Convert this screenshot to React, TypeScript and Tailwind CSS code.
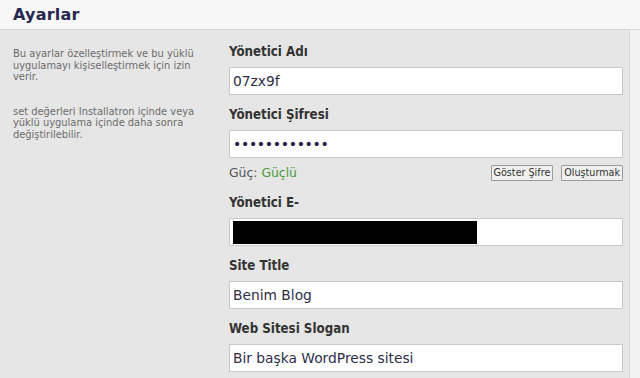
import React from 'react';

const Label: React.FC<{ children: React.ReactNode }> = ({ children }) => (
  <div className="text-[13.2px] font-bold text-[#333] leading-[16px] mb-[7px] [font-stretch:condensed]">{children}</div>
);

const Field: React.FC<{ children?: React.ReactNode }> = ({ children }) => (
  <div className="h-[28px] bg-white border border-[#c8c8c8] flex items-center px-[3px] text-[13.8px] text-[#2e2e4a]">
    {children}
  </div>
);

export default function App() {
  return (
    <div
      className="w-[640px] h-[378px] overflow-hidden bg-[#f4f4f4] flex flex-col"
      style={{ fontFamily: '"DejaVu Sans", Verdana, sans-serif' }}
    >
      <div className="h-[30px] shrink-0 bg-[#f7f7f7] border-b border-[#d6d6d6] flex items-center pl-[13px]">
        <h1 className="text-[16px] font-bold text-[#27274f] tracking-[0.2px]">Ayarlar</h1>
      </div>

      <div className="flex flex-1 min-h-0">
        <div className="flex flex-1 bg-[#e6e6e6] border-r border-[#d8d8d8]">
          {/* help text */}
          <div className="w-[216px] shrink-0 pl-[13px] pr-[3px] pt-[18px] text-[9.9px] leading-[11.6px] text-[#6b6b6b]">
            <p>Bu ayarlar özelleştirmek ve bu yüklü uygulamayı kişiselleştirmek için izin verir.</p>
            <p className="mt-[23px]">set değerleri Installatron içinde veya yüklü uygulama içinde daha sonra değiştirilebilir.</p>
          </div>

          {/* form */}
          <div className="flex-1 pl-[13px] pr-[6px] pt-[14px]">
            <Label>Yönetici Adı</Label>
            <Field>07zx9f</Field>

            <div className="mt-[12px]">
              <Label>Yönetici Şifresi</Label>
              <Field>
                <span className="text-[#22224a] text-[14px] tracking-[-0.3px] leading-none">••••••••••••</span>
              </Field>
            </div>

            <div className="flex items-center justify-between mt-[7px] h-[16px]">
              <div className="text-[12.4px] text-[#555]">
                Güç: <span className="text-[#4b9a3c]">Güçlü</span>
              </div>
              <div className="flex gap-[8px]">
                <button className="h-[16px] px-[2px] text-[9.6px] leading-none text-[#333] bg-[#efefef] border border-[#9a9a9a] rounded-[1px]">
                  Göster Şifre
                </button>
                <button className="h-[16px] px-[2px] text-[9.6px] leading-none text-[#333] bg-[#efefef] border border-[#9a9a9a] rounded-[1px]">
                  Oluşturmak
                </button>
              </div>
            </div>

            <div className="mt-[14px]">
              <Label>Yönetici E-</Label>
              <Field>
                <div className="w-[244px] h-[23px] bg-black" />
              </Field>
            </div>

            <div className="mt-[12px]">
              <Label>Site Title</Label>
              <Field>Benim Blog</Field>
            </div>

            <div className="mt-[12px]">
              <Label>Web Sitesi Slogan</Label>
              <Field>Bir başka WordPress sitesi</Field>
            </div>
          </div>
        </div>
        <div className="w-[10px] shrink-0 bg-[#f2f2f2]" />
      </div>
    </div>
  );
}
